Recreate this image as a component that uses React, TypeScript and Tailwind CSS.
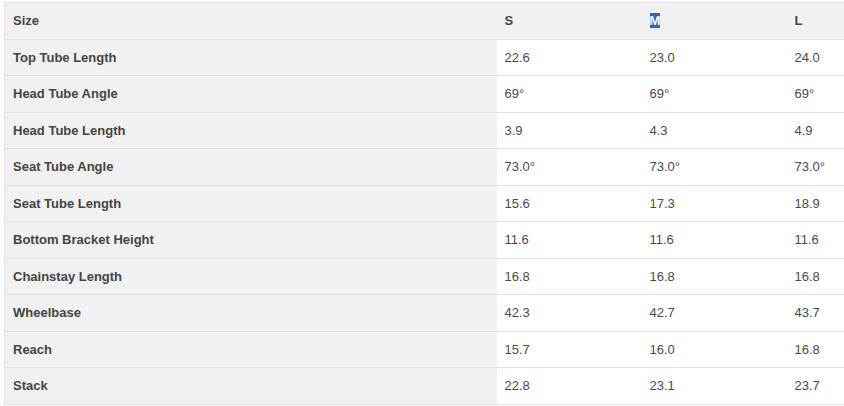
const rows: [string, string, string, string][] = [
  ["Top Tube Length", "22.6", "23.0", "24.0"],
  ["Head Tube Angle", "69°", "69°", "69°"],
  ["Head Tube Length", "3.9", "4.3", "4.9"],
  ["Seat Tube Angle", "73.0°", "73.0°", "73.0°"],
  ["Seat Tube Length", "15.6", "17.3", "18.9"],
  ["Bottom Bracket Height", "11.6", "11.6", "11.6"],
  ["Chainstay Length", "16.8", "16.8", "16.8"],
  ["Wheelbase", "42.3", "42.7", "43.7"],
  ["Reach", "15.7", "16.0", "16.8"],
  ["Stack", "22.8", "23.1", "23.7"],
];

export default function App() {
  return (
    <div className="w-[844px] h-[406px] overflow-hidden bg-white pt-[2px] pl-[4px] font-['Liberation_Sans',Arial,sans-serif] text-[13px] text-[#444444]">
      <table className="border-collapse table-fixed w-[860px] border-l border-[#e2e2e2]">
        <colgroup>
          <col className="w-[492px]" />
          <col className="w-[145px]" />
          <col className="w-[145px]" />
          <col />
        </colgroup>
        <thead>
          <tr className="h-[37px] bg-[#f1f1f1] border-y border-[#e2e2e2]">
            <th className="text-left font-bold pl-[8px]">Size</th>
            <th className="text-left font-bold pl-[8px]">S</th>
            <th className="text-left font-bold pl-[8px]">
              <span className="bg-[#2f64c3] text-white">M</span>
            </th>
            <th className="text-left font-bold pl-[8px]">L</th>
          </tr>
        </thead>
        <tbody>
          {rows.map((r, i) => (
            <tr key={r[0]} className={`border-b border-[#e2e2e2] ${i % 2 === 0 ? "h-[36px]" : "h-[37px]"}`}>
              <td className="bg-[#f1f1f1] font-bold pl-[8px]">{r[0]}</td>
              <td className="pl-[8px] text-[#4a4a4a]">{r[1]}</td>
              <td className="pl-[8px] text-[#4a4a4a]">{r[2]}</td>
              <td className="pl-[8px] text-[#4a4a4a]">{r[3]}</td>
            </tr>
          ))}
        </tbody>
      </table>
    </div>
  );
}
